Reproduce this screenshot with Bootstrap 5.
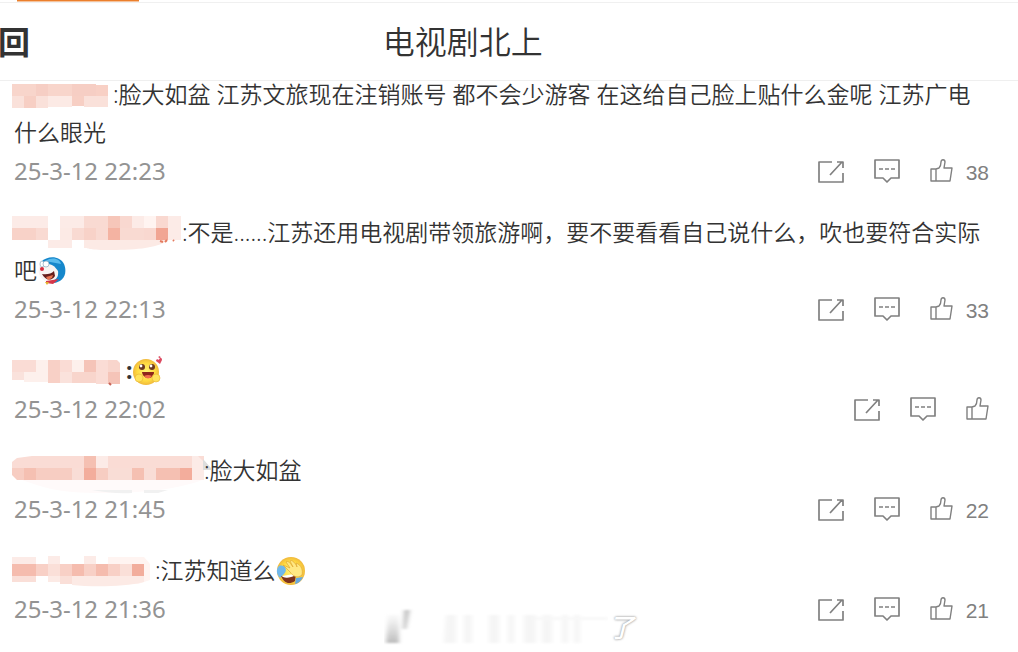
<!DOCTYPE html>
<html lang="zh-CN">
<head>
<meta charset="utf-8">
<meta name="viewport" content="width=device-width, initial-scale=1">
<title>电视剧北上</title>
<link href="https://cdn.jsdelivr.net/npm/bootstrap@5.3.0/dist/css/bootstrap.min.css" rel="stylesheet">
<style>
body { font-family: "Noto Sans", "Noto Sans CJK SC", sans-serif; color: #333; background: #fff; }
.tab-strip { height: 3px; padding-left: 17px; border-bottom: 1px solid #f0f0f0; }
.tab-strip span { width: 122px; height: 1px; background: #eb7f2c; box-shadow: 0 1px #f5c39c; }
.page-head { height: 78px; border-bottom: 1px solid #efefef; font-size: 32px; line-height: 40px; }
.head-mark { width: 37.6%; text-indent: -2px; font-weight: 700; }
.head-title { font-size: 32px; line-height: 40px; font-weight: 350; }
/* the list scrolls a little way under the header rule */
.feed { margin-top: -6px; padding: 0 29px 24px 14px; }
.feed-item { margin-bottom: 22px; }
.feed-item:last-child { margin-bottom: 0; }
.feed-text { font-size: 23px; line-height: 38px; font-weight: 350; }
.hidden-name { height: 38px; margin-left: -2px; vertical-align: top; overflow: visible; }
.emote { width: 30px; height: 30px; vertical-align: -7px; }
.feed-meta { height: 40px; }
.feed-time { font-size: 24px; line-height: 40px; color: #939393; }
.act { color: #808080; line-height: 38px; font-family: "Liberation Sans", sans-serif; font-size: 21px; }
.act svg { fill: none; stroke: currentColor; stroke-width: 1.7; stroke-linejoin: round; }
.acts { gap: 30px; }
.act-like { gap: 13px; }
.act-like span { padding-top: 4px; }
.stamp { left: calc(50% - 125px); bottom: 6px; height: 40px; width: 256px; pointer-events: none; }
.stamp-char { font-size: 26px; line-height: 34px; color: #fff; font-weight: 500; font-style: italic; text-shadow: 0 0 2px #999, 0 0 3px #bbb; }
</style>
</head>
<body>
<svg class="d-none" aria-hidden="true">
  <symbol id="share" viewBox="0 0 26 24"><path d="M14 3H1v20h24v-9M12 16 24 3M19 3h6v6"/></symbol>
  <symbol id="talk" viewBox="0 0 26 24"><path d="M1 1h24v18h-8l-4 4-4-4H1zM5 10h4M11 10h4M17 10h4"/></symbol>
  <symbol id="like" viewBox="0 0 23 24"><path stroke-width="1.4" d="M1 10h5v12H1zM6 10l3-1c2-2 2-4 2-6 0-3 4-3 4 0l-1 6h8l-2 13H6"/></symbol>
</svg>
<div class="position-relative min-vh-100">
  <div class="tab-strip d-flex"><span></span></div>
  <header class="page-head d-flex align-items-center">
    <div class="head-mark flex-shrink-0">回</div>
    <h1 class="head-title m-0">电视剧北上</h1>
  </header>
  <main class="feed">
    <article class="feed-item">
      <p class="feed-text m-0"><svg class="hidden-name" width="101" height="38" aria-hidden="true"><path fill="#f8d5cb" d="M0 9h24v12H0zM36 9h24v12H36z"/><path fill="#f6cec4" d="M24 9h12v12H24zM60 9h24v12H60z"/><path fill="#f8d0c5" d="M84 10h12v11H84z"/><path fill="#fae1da" d="M0 21h12v12H0zM24 21h12v12H24zM72 21h24v11H72z"/><path fill="#f7cfc4" d="M12 21h12v12H12zM60 21h12v10H60z"/><path fill="#fceae5" d="M36 21h24v11H36z"/></svg>:脸大如盆 江苏文旅现在注销账号 都不会少游客 在这给自己脸上贴什么金呢 江苏广电什么眼光</p>
      <div class="feed-meta d-flex justify-content-between align-items-center"><time class="feed-time">25-3-12 22:23</time>
        <div class="acts d-flex align-items-center"><button class="act btn border-0 p-0 d-flex" aria-label="转发"><svg width="26" height="24"><use href="#share"/></svg></button><button class="act btn border-0 p-0 d-flex" aria-label="评论"><svg width="26" height="24"><use href="#talk"/></svg></button><button class="act act-like btn border-0 p-0 d-flex align-items-center" aria-label="赞 38"><svg width="23" height="24"><use href="#like"/></svg><span>38</span></button></div></div>
    </article>
    <article class="feed-item">
      <p class="feed-text m-0"><svg class="hidden-name" width="170" height="38" aria-hidden="true"><path fill="#fcebe7" d="M0 3h36v12H0zM48 3h24v12H48zM108 3h24v12h-24zM156 3h13v24h-13zM36 27h24v8H36z"/><path fill="#f8d2c8" d="M0 15h24v12H0zM72 15h12v12H72z"/><path fill="#f9dad2" d="M24 15h12v12H24zM60 15h12v12H60zM72 3h24v12H72zM84 15h12v12H84zM108 15h24v12h-24z"/><path fill="#f6c6b9" d="M96 3h12v12H96z"/><path fill="#f4b3a2" d="M96 15h12v12H96z"/><path fill="#f9d8d0" d="M108 3h12v12h-12zM132 15h12v12h-12zM144 3h12v12h-12z"/><path fill="#f1a593" d="M144 15h12v12h-12z"/><path fill="#fceae5" d="M48 15h12v12H48zM72 27h84c-10 9-38 10-60 10S78 35 72 35z"/><path fill="#fff4f1" d="M132 3h12v12h-12z"/><path fill="none" stroke="#e47a5e" stroke-width="2" d="m148 28 3 1m2 0 2-2m6 0 1 1"/></svg>:不是......江苏还用电视剧带领旅游啊，要不要看看自己说什么，吹也要符合实际吧<svg class="emote" viewBox="0 0 30 30" role="img" aria-label="哆啦A梦吃惊"><path fill="#1687cb" d="M4 6C11-1 23 0 27 8c4 10-1 18-11 19L5 20z"/><path fill="#59bbed" d="M8 5c8-5 15-2 16 3z"/><path fill="#f8f4f2" d="M3 9c7-3 14-1 18 6 1 7-3 10-10 11-7-2-12-9-8-17z"/><ellipse cx="5" cy="8" rx="2" ry="3" fill="#fff" stroke="#8babbf" stroke-width=".7"/><ellipse cx="9" cy="8" rx="3" ry="3" fill="#fff" stroke="#8babbf" stroke-width=".7"/><circle cx="5" cy="13" r="2" fill="#d72a3d"/><path fill="#661e1b" d="M5 18q8 1 12-3l1 5c-4 6-10 4-13-2z"/><path fill="#e87450" d="m9 21 7-2-1 3-4 2z"/><path fill="#d6374a" d="m9 25 13-2-6 5-7-1z"/><path fill="#e5b22d" d="m8 26 4 0-2 3z"/></svg></p>
      <div class="feed-meta d-flex justify-content-between align-items-center"><time class="feed-time">25-3-12 22:13</time>
        <div class="acts d-flex align-items-center"><button class="act btn border-0 p-0 d-flex" aria-label="转发"><svg width="26" height="24"><use href="#share"/></svg></button><button class="act btn border-0 p-0 d-flex" aria-label="评论"><svg width="26" height="24"><use href="#talk"/></svg></button><button class="act act-like btn border-0 p-0 d-flex align-items-center" aria-label="赞 33"><svg width="23" height="24"><use href="#like"/></svg><span>33</span></button></div></div>
    </article>
    <article class="feed-item">
      <p class="feed-text m-0"><svg class="hidden-name" width="114" height="38" aria-hidden="true"><path fill="#fadcd5" d="M0 9h24v12H0zM48 9h12v12H48zM84 9h12v24H84z"/><path fill="#f8d0c6" d="M36 9h12v23H36z"/><path fill="#f5c4b8" d="M72 9h12v12H72zM96 21h12v12H96z"/><path fill="#fdf0ec" d="M24 9h12v12H24zM60 9h12v12H60zM12 21h24v10H12z"/><path fill="#fae2dc" d="M0 21h12v8H0zM48 21h12v11H48z"/><path fill="#f8d5cc" d="M60 21h24v11H60zM96 9h9l3 3v9H96z"/><path stroke="#c76457" stroke-width="2" d="m97 32 2 2"/></svg><b>:</b><svg class="emote" viewBox="0 0 30 30" role="img" aria-label="开心"><defs><radialGradient id="face"><stop stop-color="#fff477"/><stop offset=".7" stop-color="#ffd940"/><stop offset="1" stop-color="#f0b93c"/></radialGradient></defs><circle cx="14" cy="16" r="13" fill="url(#face)"/><circle cx="10" cy="11" r="3" fill="#6c3921"/><circle cx="20" cy="11" r="3" fill="#6c3921"/><circle cx="9" cy="10" r="1.4" fill="#fff"/><circle cx="19" cy="10" r="1.4" fill="#fff"/><path fill="#8d251b" d="M10 16h12c0 8-11 8-12 0z"/><path fill="#f06b4d" d="M12 20q4-2 8 0-4 5-8 0z"/><circle cx="7" cy="22" r="4" fill="#ffe35c" stroke="#e5b235" stroke-width=".6"/><circle cx="24" cy="22" r="4" fill="#ffe35c" stroke="#e5b235" stroke-width=".6"/><path fill="#dc4960" d="m28 8-4-3c0-2 2-2 3-1 0-2 3-3 3 0zM29 3l-3-2 2-1z"/></svg></p>
      <div class="feed-meta d-flex justify-content-between align-items-center"><time class="feed-time">25-3-12 22:02</time>
        <div class="acts d-flex align-items-center"><button class="act btn border-0 p-0 d-flex" aria-label="转发"><svg width="26" height="24"><use href="#share"/></svg></button><button class="act btn border-0 p-0 d-flex" aria-label="评论"><svg width="26" height="24"><use href="#talk"/></svg></button><button class="act btn border-0 p-0 d-flex" aria-label="赞"><svg width="23" height="24"><use href="#like"/></svg></button></div></div>
    </article>
    <article class="feed-item">
      <p class="feed-text m-0"><svg class="hidden-name" width="192" height="38" aria-hidden="true"><path fill="#fadcd5" d="M0 11l5-4 15-2h172v12H0z"/><path fill="#f7cdc2" d="M0 17h192v12H5l-5-5z"/><path fill="#f5c0b2" d="M12 17h12v12H12zM72 5h12v12H72zM120 17h12v12h-12zM144 17h24v12h-24z"/><path fill="#f3ad9c" d="M72 17h12v12H72zM168 17h12v12h-12z"/><path fill="#f9ddd6" d="M60 17h12v12H60zM96 17h24v12H96zM132 17h12v12h-12z"/><path fill="#fcebe7" d="M84 5h12v12H84zM180 5h6l6 6v18h-12z"/><path fill="#fffafa" d="M10 29h180c-24 9-55 13-100 13S30 36 10 29z"/><path fill="#f1f1f1" d="M80 39h40v3c-14 1-28-1-40-3zM132 39h24l-10 3h-14z"/><path fill="#ddd" d="m191 8 8 9v2h-8z"/></svg>:脸大如盆</p>
      <div class="feed-meta d-flex justify-content-between align-items-center"><time class="feed-time">25-3-12 21:45</time>
        <div class="acts d-flex align-items-center"><button class="act btn border-0 p-0 d-flex" aria-label="转发"><svg width="26" height="24"><use href="#share"/></svg></button><button class="act btn border-0 p-0 d-flex" aria-label="评论"><svg width="26" height="24"><use href="#talk"/></svg></button><button class="act act-like btn border-0 p-0 d-flex align-items-center" aria-label="赞 22"><svg width="23" height="24"><use href="#like"/></svg><span>22</span></button></div></div>
    </article>
    <article class="feed-item">
      <p class="feed-text m-0"><svg class="hidden-name" width="143" height="38" aria-hidden="true"><path fill="#fcebe7" d="M0 6h24v7H0zM36 5h12v8H36zM72 5h12v8H72zM0 13h132v12H0z"/><path fill="#fff4f1" d="M96 6h36l6 7v16l-12 4h-30z"/><path fill="#f5bcae" d="M0 13h24v12H0zM60 13h12v12H60zM84 13h12v12H84z"/><path fill="#f8d0c6" d="M24 13h12v12H24zM48 13h12v12H48zM72 13h12v12H72zM96 13h12v12H96z"/><path fill="#fadfd8" d="M36 13h12v12H36zM0 25h24v6H0zM48 25h12v8H48zM108 13h12v12h-12z"/><path fill="#f2ad9c" d="M120 13h12v12h-12z"/><path fill="#fceae5" d="M36 25h12v6H36zM60 25h72v6c-20 5-52 5-72 3z"/></svg>:江苏知道么<svg class="emote" viewBox="0 0 30 30" role="img" aria-label="笑哭捂脸"><circle cx="15" cy="15" r="14" fill="url(#face)"/><path fill="#70b8eb" d="M3 10c6-2 9 4 5 8l-4 4C0 18 0 13 3 10z"/><path fill="#7d321d" d="M5 20q10 3 15-2l-1 7c-6 4-11 2-14-5z"/><path fill="#fff" d="m6 20 12-2v2q-7 3-11 1z"/><path fill="#ffe883" stroke="#dea637" stroke-width=".7" d="m7 9 7 3-4-6c2-2 5 2 7 5l-3-6c2-2 6 3 7 6l-1-4c6 2 7 8 6 12-5 4-9 1-12-3z"/><path fill="#64a9e5" d="m20 22 7-1q-3 6-8 7z"/></svg></p>
      <div class="feed-meta d-flex justify-content-between align-items-center"><time class="feed-time">25-3-12 21:36</time>
        <div class="acts d-flex align-items-center"><button class="act btn border-0 p-0 d-flex" aria-label="转发"><svg width="26" height="24"><use href="#share"/></svg></button><button class="act btn border-0 p-0 d-flex" aria-label="评论"><svg width="26" height="24"><use href="#talk"/></svg></button><button class="act act-like btn border-0 p-0 d-flex align-items-center" aria-label="赞 21"><svg width="23" height="24"><use href="#like"/></svg><span>21</span></button></div></div>
    </article>
  </main>
  <div class="stamp position-absolute d-flex align-items-center">
    <svg width="224" height="40" aria-hidden="true"><defs><filter id="soft"><feGaussianBlur stdDeviation="2 1"/></filter><linearGradient id="fade" x2="0" y2="1"><stop stop-color="#ccc" stop-opacity=".1"/><stop offset="1" stop-color="#bbb"/></linearGradient></defs><g filter="url(#soft)"><path fill="url(#fade)" d="M4 8h11v28H2z"/><path fill="#c4c4c4" d="M20 3h6l-4 19h-3z"/><path fill="#f5f5f5" d="M62 8h10v28H60zM80 8h8v28h-8zM105 8h10v28h-10zM124 8h6v28h-6zM140 8h12v28h-12zM158 8h10v28h-10zM178 8h6v28h-6zM190 8h6v28h-6z"/><path fill="#f8f8f8" d="M150 10h74v3h-74z"/></g></svg>
    <span class="stamp-char">了</span>
  </div>
</div>
<script src="https://cdn.jsdelivr.net/npm/bootstrap@5.3.0/dist/js/bootstrap.bundle.min.js"></script>
</body>
</html>
